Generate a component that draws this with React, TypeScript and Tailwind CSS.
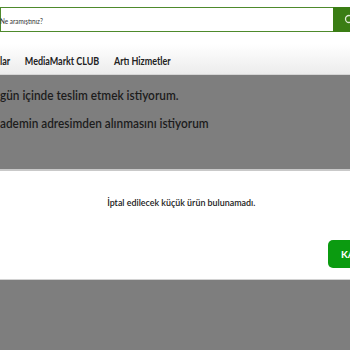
import React from "react";

const font = { fontFamily: 'Lato, "Liberation Sans", sans-serif' };

export default function App() {
  return (
    <div className="w-[350px] h-[350px] overflow-hidden bg-white flex flex-col" style={font}>
      <div className="h-[44px] pt-[7px] flex">
        <div className="flex-1 h-[25px] border border-[#4e8a2c] border-r-0 flex items-center pt-[2px] text-[8px] text-[#333]">
          <span className="inline-block origin-left scale-x-[0.8] -ml-[1px]">Ne aramıştınız?</span>
        </div>
        <div className="w-[17px] h-[25px] bg-[#3a7d14] flex items-center justify-end overflow-hidden">
          <svg width="12" height="12" viewBox="0 0 12 12" className="translate-x-[6px]">
            <circle cx="5" cy="5" r="3.5" fill="none" stroke="#dfe9d6" strokeWidth="1.3" />
          </svg>
        </div>
      </div>
      <div className="h-[31px] pt-[4px] flex items-center bg-gradient-to-b from-white to-[#ececec] border-b border-[#d6d6d6]">
        <div className="flex gap-[18px] origin-left scale-x-[0.815] text-[11px] font-bold text-[#222] whitespace-nowrap">
          <span>lar</span>
          <span>MediaMarkt CLUB</span>
          <span>Artı Hizmetler</span>
        </div>
      </div>
      <div className="h-[94px] bg-[#7e7e7e] text-[#1c1c1c] text-[14px] font-semibold pt-[9px] flex flex-col items-start gap-[7px] whitespace-nowrap">
        <div className="origin-left scale-x-[0.845]">gün içinde teslim etmek istiyorum.</div>
        <div className="origin-left scale-x-[0.845]">ademin adresimden alınmasını istiyorum</div>
      </div>
      <div className="h-[2px] bg-[#c9c9c9]" />
      <div className="h-[108px] bg-white flex flex-col">
        <div className="pt-[24px] flex justify-center text-[10px] font-semibold text-[#1a1a1a] pl-[12px]">
          <span className="inline-block scale-x-[0.89]">İptal edilecek küçük ürün bulunamadı.</span>
        </div>
        <div className="flex justify-end mt-[30px]">
          <div className="w-[22px] h-[28px] bg-[#0b9b10] rounded-l-[5px] flex items-center pl-[13px] text-[10px] font-bold text-white overflow-hidden whitespace-nowrap">
            KA
          </div>
        </div>
      </div>
      <div className="h-[1px] bg-[#d2d2d2]" />
      <div className="flex-1 bg-[#7e7e7e]" />
    </div>
  );
}
